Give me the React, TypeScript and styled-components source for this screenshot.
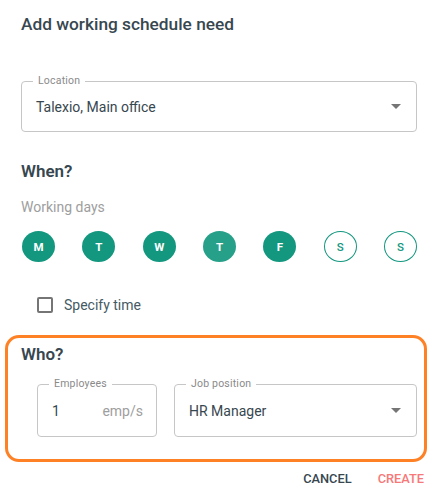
import React from "react";
import styled, { createGlobalStyle } from "styled-components";

const GlobalStyle = createGlobalStyle`
  body {
    margin: 0;
    background: #ffffff;
    font-family: Roboto, "Liberation Sans", sans-serif;
  }
`;

const Dialog = styled.div`
  width: 438px;
  height: 502px;
  box-sizing: border-box;
  padding: 12px 21px 0 21px;
  color: #37474f;
`;

const Title = styled.h2`
  margin: 0;
  font-size: 17.3px;
  line-height: 24px;
  font-weight: 500;
`;

const Field = styled.div<{ $width?: number; $grow?: boolean; $height?: number }>`
  position: relative;
  box-sizing: border-box;
  height: ${(p) => (p.$height ? p.$height : 51)}px;
  width: ${(p) => (p.$width ? `${p.$width}px` : "auto")};
  flex: ${(p) => (p.$grow ? 1 : "none")};
  border: 1px solid #c6c6c6;
  border-radius: 4px;
  display: flex;
  align-items: center;
  padding: 0 13px 0 14px;
  font-size: 14px;
  color: #37474f;
`;

const FieldLabel = styled.span`
  position: absolute;
  top: -7px;
  left: 11px;
  padding: 0 5px;
  background: #ffffff;
  font-size: 10.5px;
  line-height: 12px;
  color: #8a8a8a;
  letter-spacing: 0.2px;
`;

const Value = styled.span`
  flex: 1;
`;

const Unit = styled.span`
  color: #9e9e9e;
`;

const Arrow = styled.span`
  width: 0;
  height: 0;
  border-left: 5px solid transparent;
  border-right: 5px solid transparent;
  border-top: 5px solid #757575;
  margin-right: 2px;
`;

const LocationField = styled(Field)`
  margin-top: 45px;
`;

const SectionTitle = styled.h3`
  margin: 0;
  font-size: 17px;
  line-height: 24px;
  font-weight: 600;
  color: #37474f;
`;

const WhenTitle = styled(SectionTitle)`
  margin-top: 27px;
`;

const Caption = styled.div`
  margin-top: 14px;
  font-size: 14px;
  line-height: 20px;
  color: #9e9e9e;
`;

const Days = styled.div`
  margin-top: 14px;
  display: flex;
  justify-content: space-between;
  padding-left: 1px;
`;

const Day = styled.div<{ $active: boolean; $tone?: string }>`
  box-sizing: border-box;
  width: 33px;
  height: 31px;
  border-radius: 50%;
  display: flex;
  align-items: center;
  justify-content: center;
  font-size: 11.5px;
  font-weight: ${(p) => (p.$active ? 700 : 500)};
  background: ${(p) => (p.$active ? p.$tone || "#13977f" : "#ffffff")};
  color: ${(p) => (p.$active ? "#ffffff" : "#13977f")};
  border: 1px solid ${(p) => (p.$active ? "transparent" : "#13977f")};
`;

const CheckRow = styled.label`
  margin-top: 31px;
  padding-left: 16px;
  display: flex;
  align-items: center;
  gap: 11px;
  height: 24px;
  font-size: 14px;
  color: #455a64;
`;

const Box = styled.span`
  box-sizing: border-box;
  width: 16px;
  height: 16px;
  border: 2px solid #757575;
  border-radius: 2px;
`;

const Highlight = styled.section`
  margin: 18px -10px 0 -16px;
  height: 127px;
  box-sizing: border-box;
  border: 3px solid #ff8126;
  border-radius: 14px;
  padding: 4px 7px 0 13px;
`;

const FieldRow = styled.div`
  margin-top: 18px;
  padding-left: 16px;
  display: flex;
  gap: 17px;
`;

const Actions = styled.div`
  margin: 9px -7px 0 0;
  display: flex;
  justify-content: flex-end;
  gap: 26px;
`;

const Action = styled.button<{ $primary?: boolean }>`
  border: none;
  background: none;
  padding: 0;
  font-family: inherit;
  font-size: 12.8px;
  font-weight: 500;
  line-height: 16px;
  text-transform: uppercase;
  color: ${(p) => (p.$primary ? "#f77878" : "#37474f")};
`;

const days = [
  { l: "M", on: true },
  { l: "T", on: true },
  { l: "W", on: true },
  { l: "T", on: true, tone: "#27a08a" },
  { l: "F", on: true },
  { l: "S", on: false },
  { l: "S", on: false },
];

export default function App() {
  return (
    <Dialog>
      <GlobalStyle />
      <Title>Add working schedule need</Title>
      <LocationField>
        <FieldLabel>Location</FieldLabel>
        <Value>Talexio, Main office</Value>
        <Arrow />
      </LocationField>

      <WhenTitle>When?</WhenTitle>
      <Caption>Working days</Caption>
      <Days>
        {days.map((d, i) => (
          <Day key={i} $active={d.on} $tone={d.tone}>
            {d.l}
          </Day>
        ))}
      </Days>
      <CheckRow>
        <Box />
        Specify time
      </CheckRow>

      <Highlight>
        <SectionTitle>Who?</SectionTitle>
        <FieldRow>
          <Field $width={120} $height={53}>
            <FieldLabel>Employees</FieldLabel>
            <Value>1</Value>
            <Unit>emp/s</Unit>
          </Field>
          <Field $grow $height={53}>
            <FieldLabel>Job position</FieldLabel>
            <Value>HR Manager</Value>
            <Arrow />
          </Field>
        </FieldRow>
      </Highlight>

      <Actions>
        <Action>Cancel</Action>
        <Action $primary>Create</Action>
      </Actions>
    </Dialog>
  );
}
